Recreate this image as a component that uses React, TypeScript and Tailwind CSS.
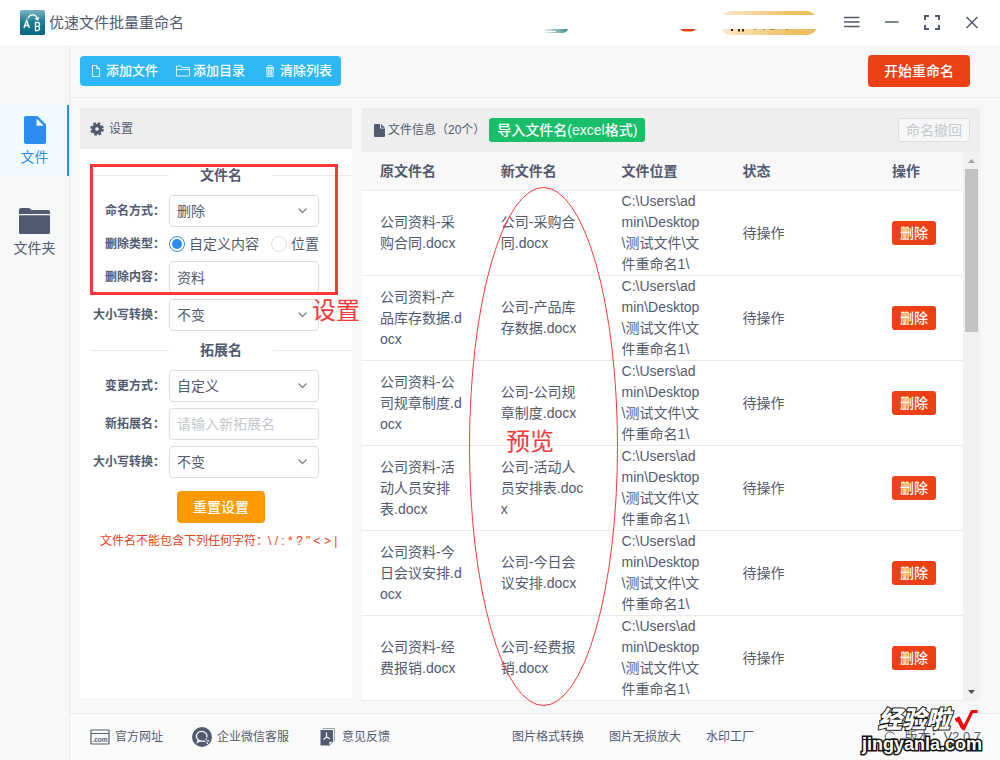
import { ReactNode, useState } from "react";

const files = [
  { id: 1, name: "公司资料-采购合同.docx" },
  { id: 2, name: "公司资料-产品库存数据.docx" },
  { id: 3, name: "公司资料-公司规章制度.docx" },
  { id: 4, name: "公司资料-活动人员安排表.docx" },
  { id: 5, name: "公司资料-今日会议安排.docx" },
  { id: 6, name: "公司资料-经费报销.docx" },
];

const folder = "C:\\Users\\admin\\Desktop\\测试文件\\文件重命名1\\";

const inputStyle =
  "w-full h-8 rounded border border-[#dcdee2] bg-white px-[7px] text-sm text-[#515a6e] placeholder:text-[#c5c8ce] outline-none";

function Logo() {
  return (
    <svg width="25" height="25" viewBox="0 0 25 25" aria-hidden="true">
      <defs>
        <linearGradient id="logo" x1="0" y1="0" x2="0" y2="1">
          <stop offset="0" stopColor="#7fb3c0" />
          <stop offset="0.45" stopColor="#1f7f96" />
          <stop offset="1" stopColor="#04677f" />
        </linearGradient>
      </defs>
      <rect width="25" height="25" rx="1.5" fill="url(#logo)" />
      <g fill="none" stroke="#fff" strokeWidth="1.3">
        <path d="M4 18 6.700 10.200 9.400 18M5 15.500h3.500" />
        <path d="M15.500 12.500v8h2.500a2.200 2.200 0 0 0 0-4.200h-2.500 2.200a1.900 1.900 0 0 0 0-3.800z" />
        <path d="M8 8.500C9.500 3.500 16 3.500 17.500 9M15.200 8.200l2.400 1.600 1.200-2.600" />
      </g>
    </svg>
  );
}

function TitleBar() {
  return (
    <header className="h-[45px] bg-white flex items-center pl-5 pr-[21px]">
      <Logo />
      <h1 className="ml-1 text-[15px] leading-5">优速文件批量重命名</h1>
      <svg
        className="ml-auto"
        width="276"
        height="24"
        viewBox="0 0 276 24"
        aria-hidden="true"
      >
        <defs>
          <linearGradient id="vip" x1="0" x2="1">
            <stop offset="0" stopColor="#fbe8cb" />
            <stop offset="0.7" stopColor="#eec269" />
            <stop offset="1" stopColor="#ebbb57" />
          </linearGradient>
          <linearGradient id="avatar" x1="0" x2="1">
            <stop offset="0" stopColor="#dcebed" />
            <stop offset="1" stopColor="#3f8f98" />
          </linearGradient>
        </defs>
        <path d="M1 18h23q-1 3.500-5 4H1z" fill="url(#avatar)" />
        <path d="M1 20.500h11" stroke="#fff" />
        <path d="M136 18h16q-2 2.500-5 2.500h-6q-3 0-5-2.500z" fill="#ed4014" />
        <rect x="176" width="98" height="24" rx="12" fill="url(#vip)" />
        <rect x="170" y="4" width="106" height="14" fill="#fff" />
        <path
          d="M188 18v2M195 18v2.500M199 18v2.500"
          stroke="#3a2410"
          strokeWidth="2"
        />
        <path d="M210 18.500h2M219 18.500h2M226 18.500h5M242 18.500h2" stroke="#b98a3e" />
      </svg>
      <div className="ml-6 flex items-center gap-[25px]">
        <button type="button" aria-label="菜单">
          <svg width="16" height="16" viewBox="0 0 16 16" stroke="#515a6e" strokeWidth="1.6">
            <path d="M0 2.500h15.500M0 7h15.500M0 11.500h15.500" />
          </svg>
        </button>
        <button type="button" aria-label="最小化">
          <svg width="14" height="16" viewBox="0 0 14 16" stroke="#515a6e" strokeWidth="1.5">
            <path d="M0 7h13.500" />
          </svg>
        </button>
        <button type="button" aria-label="最大化">
          <svg width="16" height="16" viewBox="0 0 16 16" fill="none" stroke="#515a6e" strokeWidth="2">
            <path d="M1 5V1h4M11 1h4v4M15 10v4h-4M5 14H1v-4" />
          </svg>
        </button>
        <button type="button" aria-label="关闭">
          <svg width="14" height="16" viewBox="0 0 14 16" stroke="#515a6e" strokeWidth="1.5">
            <path d="M1.500 2l11 11M12.500 2l-11 11" />
          </svg>
        </button>
      </div>
    </header>
  );
}

function SideItem({
  active,
  label,
  children,
}: {
  active?: boolean;
  label: string;
  children: ReactNode;
}) {
  return (
    <a
      href="#"
      className={`flex flex-col items-center h-[71px] pt-[9px] text-sm leading-5 ${
        active
          ? "bg-[#f0faff] text-[#2d8cf0] shadow-[inset_-2px_0_0_#2d8cf0]"
          : ""
      }`}
    >
      <span className="h-8 mb-px flex items-center">{children}</span>
      {label}
    </a>
  );
}

function Sidebar() {
  return (
    <nav className="w-[70px] shrink-0 border-r border-[#e8eaec] pt-15 flex flex-col gap-5">
      <SideItem active label="文件">
        <svg width="22" height="28" viewBox="0 0 22 28" fill="currentColor">
          <path
            fillRule="evenodd"
            d="M2 0h11.500L22 8.500V26a2 2 0 0 1-2 2H2a2 2 0 0 1-2-2V2a2 2 0 0 1 2-2zM12.500 2.500V9.800h7.300z"
          />
        </svg>
      </SideItem>
      <SideItem label="文件夹">
        <svg width="31" height="26" viewBox="0 0 31 26" fill="currentColor">
          <path d="M0 6V2a2 2 0 0 1 2-2h8l3 2h16a2 2 0 0 1 2 2v2z" />
          <path d="M0 7.200h31V24.500a1.500 1.500 0 0 1-1.500 1.500h-28A1.500 1.500 0 0 1 0 24.500z" />
        </svg>
      </SideItem>
    </nav>
  );
}

function ToolButton({ label, children }: { label: string; children: ReactNode }) {
  return (
    <button
      type="button"
      className="h-[30px] px-[9px] flex items-center gap-[3px] text-[13px] leading-5 font-medium text-white cursor-pointer"
    >
      {children}
      {label}
    </button>
  );
}

function Toolbar() {
  return (
    <div className="h-[53px] pl-2.5 pr-[30px] flex items-center justify-between border-b border-[#e8eaec]">
      <div className="flex rounded bg-[#2db7f5]">
        <ToolButton label="添加文件">
          <svg width="14" height="14" viewBox="0 0 14 14" fill="none" stroke="#fff" strokeOpacity="0.85">
            <path d="M3.500 1.500h4l3 3v8h-7zM7.500 1.500v3h3" />
          </svg>
        </ToolButton>
        <ToolButton label="添加目录">
          <svg width="14" height="14" viewBox="0 0 14 14" fill="none" stroke="#fff" strokeOpacity="0.85">
            <path d="M0.500 12V2h4.500l1 1.500h7.500V12zM0.500 5.500h13" />
          </svg>
        </ToolButton>
        <ToolButton label="清除列表">
          <svg width="14" height="14" viewBox="0 0 14 14" fill="none" stroke="#fff" strokeOpacity="0.7">
            <path d="M2.500 3.500h9M5 3V1.500h4V3" />
            <path
              d="M3.500 4.500h7l-.5 8H4zM5.500 5.500v6M7 5.500v6M8.500 5.500v6"
              fill="#fff"
              fillOpacity="0.2"
            />
          </svg>
        </ToolButton>
      </div>
      <button
        type="button"
        className="h-8 px-4 rounded bg-[#ed4014] text-sm font-medium text-white cursor-pointer"
      >
        开始重命名
      </button>
    </div>
  );
}

function Divider({ children }: { children: ReactNode }) {
  return (
    <div className="my-[9px] ml-2.5 flex items-center text-sm leading-[21px] font-bold">
      <span className="flex-1 h-px bg-[#e8eaec]" />
      <h3 className="w-[104px] text-center">{children}</h3>
      <span className="flex-1 h-px bg-[#e8eaec]" />
    </div>
  );
}

function Field({
  label,
  id,
  children,
}: {
  label: string;
  id: string;
  children: ReactNode;
}) {
  return (
    <div className="flex items-center pr-[33px]">
      <label
        htmlFor={id}
        className="w-[85px] mr-1 shrink-0 text-right text-xs font-bold whitespace-nowrap"
      >
        {label}
      </label>
      <div className="flex-1 min-w-0">{children}</div>
    </div>
  );
}

function Select({ id, options }: { id: string; options: string[] }) {
  return (
    <div className="relative">
      <select id={id} className={`${inputStyle} appearance-none`}>
        {options.map((option) => (
          <option key={option}>{option}</option>
        ))}
      </select>
      <svg
        className="absolute right-3 top-3 pointer-events-none"
        width="9"
        height="8"
        viewBox="0 0 9 8"
        fill="none"
        stroke="#808695"
        strokeWidth="1.4"
      >
        <path d="M0.500 1.500l4 4 4-4" />
      </svg>
    </div>
  );
}

function Radio({
  id,
  label,
  checked,
  onChange,
}: {
  id: string;
  label: string;
  checked: boolean;
  onChange: () => void;
}) {
  return (
    <label htmlFor={id} className="flex items-center gap-1 text-sm whitespace-nowrap">
      <input
        id={id}
        type="radio"
        name="deleteType"
        checked={checked}
        onChange={onChange}
        className="appearance-none w-4 h-4 rounded-full border border-[#dcdee2] bg-white bg-clip-content p-0.5 checked:border-[#2d8cf0] checked:bg-[#2d8cf0]"
      />
      {label}
    </label>
  );
}

function Settings() {
  const [type, setType] = useState("custom");
  const [content, setContent] = useState("资料");

  return (
    <section className="w-68 shrink-0 mb-[3px] bg-white">
      <h2 className="h-[41px] px-2.5 flex items-center gap-[5px] bg-[#eeeeee] text-xs">
        <svg width="14" height="14" viewBox="0 0 14 14" fill="none" stroke="#515a6e">
          <circle cx="7" cy="7" r="3.500" strokeWidth="3.400" />
          <circle cx="7" cy="7" r="5.700" strokeWidth="2.200" strokeDasharray="2.600 1.877" />
        </svg>
        设置
      </h2>
      <form className="relative pt-[7px]" onSubmit={(e) => e.preventDefault()}>
        <Divider>文件名</Divider>
        <div className="flex flex-col gap-1.5">
          <Field id="mode" label="命名方式：">
            <Select id="mode" options={["删除", "替换", "插入"]} />
          </Field>
          <Field id="typeCustom" label="删除类型：">
            <div className="h-[22px] flex items-center justify-between">
              <Radio
                id="typeCustom"
                label="自定义内容"
                checked={type === "custom"}
                onChange={() => setType("custom")}
              />
              <Radio
                id="typePosition"
                label="位置"
                checked={type === "position"}
                onChange={() => setType("position")}
              />
            </div>
          </Field>
          <Field id="content" label="删除内容：">
            <input
              id="content"
              className={inputStyle}
              value={content}
              onChange={(e) => setContent(e.target.value)}
            />
          </Field>
          <Field id="nameCase" label="大小写转换：">
            <Select id="nameCase" options={["不变", "大写", "小写"]} />
          </Field>
        </div>
        <Divider>拓展名</Divider>
        <div className="flex flex-col gap-1.5">
          <Field id="extMode" label="变更方式：">
            <Select id="extMode" options={["自定义", "不变"]} />
          </Field>
          <Field id="ext" label="新拓展名：">
            <input id="ext" className={inputStyle} placeholder="请输入新拓展名" />
          </Field>
          <Field id="extCase" label="大小写转换：">
            <Select id="extCase" options={["不变", "大写", "小写"]} />
          </Field>
        </div>
        <button
          type="reset"
          className="mt-[13px] ml-[97px] h-8 px-4 rounded bg-[#ff9900] text-sm font-medium text-white cursor-pointer"
        >
          重置设置
        </button>
        <p className="mt-2 pl-5 text-xs leading-5 text-[#ed4014] whitespace-nowrap">
          文件名不能包含下列任何字符：\ / : * ? " &lt; &gt; |
        </p>
        <div className="absolute left-2.5 top-[15px] w-62 h-[131px] border-3 border-[#fb3838] pointer-events-none" />
        <span className="absolute left-58 top-[146px] z-10 text-2xl leading-8 text-[#fb3838] whitespace-nowrap pointer-events-none">
          设置
        </span>
      </form>
    </section>
  );
}

function FileTable() {
  return (
    <table className="flex-1 table-fixed border-separate border-spacing-0 bg-white text-sm leading-[21px]">
      <colgroup>
        <col className="w-[20.1%]" />
        <col className="w-[20.1%]" />
        <col className="w-[20.1%]" />
        <col className="w-[24.9%]" />
        <col className="w-[14.8%]" />
      </colgroup>
      <thead>
        <tr className="h-[39px] bg-[#f8f8f9] text-left">
          {["原文件名", "新文件名", "文件位置", "状态", "操作"].map((title) => (
            <th key={title} className="px-[18px] border-b border-[#e8eaec] font-bold">
              {title}
            </th>
          ))}
        </tr>
      </thead>
      <tbody>
        {files.map((file) => (
          <tr key={file.id} className="h-[85px] break-all">
            <td className="px-[18px] border-b border-[#e8eaec]">{file.name}</td>
            <td className="px-[18px] border-b border-[#e8eaec]">
              {file.name.replace("资料", "")}
            </td>
            <td className="px-[18px] border-b border-[#e8eaec]">{folder}</td>
            <td className="px-[18px] border-b border-[#e8eaec]">待操作</td>
            <td className="px-[18px] border-b border-[#e8eaec]">
              <button
                type="button"
                className="block h-6 px-2 rounded-[3px] bg-[#ed4014] font-medium text-white whitespace-nowrap cursor-pointer"
              >
                删除
              </button>
            </td>
          </tr>
        ))}
      </tbody>
    </table>
  );
}

function FilePanel() {
  return (
    <section className="relative flex-1 min-w-0">
      <div className="h-11 pl-3 pr-2.5 flex items-center bg-[#eeeeee]">
        <svg width="11" height="13" viewBox="0 0 11 13" fill="#515a6e">
          <path d="M1 0h5v4.500h5V12a1 1 0 0 1-1 1H1a1 1 0 0 1-1-1V1a1 1 0 0 1 1-1zM7 0l4 3.700H7z" />
        </svg>
        <h2 className="ml-[3px] text-xs">文件信息（20个）</h2>
        <button
          type="button"
          className="ml-1 h-6 px-2 rounded-[3px] bg-[#19be6b] text-sm leading-5 font-medium text-white cursor-pointer"
        >
          导入文件名(excel格式)
        </button>
        <button
          type="button"
          disabled
          className="ml-auto h-6 px-[7px] rounded-[3px] border border-[#dcdee2] bg-[#f7f7f7] text-sm leading-5 text-[#c5c8ce]"
        >
          命名撤回
        </button>
      </div>
      <div className="flex">
        <FileTable />
        <div className="w-[17px] shrink-0 flex flex-col items-center bg-[#f1f1f1]">
          <svg width="17" height="17" viewBox="0 0 17 17" fill="#a3a3a3">
            <path d="M5 11h7L8.500 7z" />
          </svg>
          <div className="w-[13px] h-[163px] bg-[#c1c1c1]" />
          <svg className="mt-auto" width="17" height="17" viewBox="0 0 17 17" fill="#505050">
            <path d="M5 6h7L8.500 10z" />
          </svg>
        </div>
      </div>
      <svg
        className="absolute left-[107px] top-[79px] pointer-events-none"
        width="149"
        height="519"
        viewBox="0 0 149 519"
        fill="none"
        stroke="#fb3838"
      >
        <ellipse cx="74.500" cy="259.500" rx="74" ry="259" />
      </svg>
      <span className="absolute left-36 top-[318px] text-2xl leading-8 text-[#fb3838] pointer-events-none">
        预览
      </span>
    </section>
  );
}

function Footer() {
  return (
    <footer className="relative h-[47px] pl-5 pr-[19px] flex items-center border-t border-[#e8eaec] bg-[#fafafa] text-xs leading-5 whitespace-nowrap">
      <div className="flex items-center gap-[29px]">
        <a href="#" className="flex items-center gap-[5px]">
          <svg width="20" height="20" viewBox="0 0 20 20" fill="none" stroke="#515a6e">
            <rect x="1" y="3" width="18" height="14" rx="0.500" strokeWidth="1.200" />
            <path d="M1 6.500h18" />
            <text
              x="10"
              y="14.500"
              textAnchor="middle"
              fontSize="6.500"
              fontWeight="bold"
              fill="#515a6e"
              stroke="none"
            >
              .com
            </text>
          </svg>
          官方网址
        </a>
        <a href="#" className="flex items-center gap-[5px]">
          <svg width="20" height="20" viewBox="0 0 20 20" fill="none" stroke="#fff">
            <circle cx="10" cy="10" r="10" fill="#515a6e" stroke="none" />
            <path
              d="M14.800 10.500a5.300 4.900 0 1 0-3.300 3.300M6.200 13l-.7 2.300 2.500-1.300"
              strokeWidth="1.300"
            />
            <path d="M14.200 11.500v1.800M13.300 14.300h-2M17.200 13.800h-2M15.200 15.200v1.800" strokeWidth="1.200" />
          </svg>
          企业微信客服
        </a>
        <a href="#" className="flex items-center gap-[7px] ml-0.5">
          <svg width="15" height="18" viewBox="0 0 15 18">
            <path d="M2.500 0.500h12v13" fill="none" stroke="#9aa0ad" />
            <path d="M0.500 2h12.500v11.500L9 17.500H0.500z" fill="#515a6e" />
            <path d="M9 17.500v-4h4z" fill="#fafafa" stroke="#515a6e" strokeWidth="0.600" />
            <path d="M6.500 4.500v4.500l-3 2.500M6.500 9l3.500 1.800" fill="none" stroke="#fff" strokeWidth="1.200" />
          </svg>
          意见反馈
        </a>
      </div>
      <div className="ml-30 pl-0.5 flex items-center gap-[25px]">
        <a href="#">图片格式转换</a>
        <a href="#">图片无损放大</a>
        <a href="#">水印工厂</a>
      </div>
      <div className="ml-auto flex items-center gap-2 text-[13px]">
        <svg width="12" height="12" viewBox="0 0 12 12" fill="none" stroke="#515a6e">
          <path d="M10.500 3.500A5 5 0 1 0 11 7" />
        </svg>
        版本：V2.0.7
      </div>
      <div className="absolute right-4 -top-2 w-[122px] font-bold text-white pointer-events-none [paint-order:stroke] [-webkit-text-stroke:3px_#111]">
        <div className="flex items-center justify-end gap-1 pr-1.5 text-2xl leading-7 font-black italic [-webkit-text-stroke:2px_#111]">
          经验啦
          <svg width="24" height="24" viewBox="0 0 24 24" fill="none" stroke="#f00">
            <path d="M1.500 12.500l3-1.500 4.500 9" strokeWidth="4" />
            <path d="M9 22L18 3.500h5.500" strokeWidth="3" />
          </svg>
        </div>
        <div className="text-lg leading-5">jingyanla.com</div>
      </div>
    </footer>
  );
}

export default function App() {
  return (
    <div className="min-h-screen flex flex-col bg-[#f5f7f9] text-[#515a6e] font-['Liberation_Sans','Noto_Sans_CJK_SC',sans-serif]">
      <TitleBar />
      <div className="flex-1 flex">
        <Sidebar />
        <main className="flex-1 min-w-0 flex flex-col">
          <Toolbar />
          <div className="flex-1 flex gap-2.5 pl-2.5 pr-5 pt-2.5 pb-3">
            <Settings />
            <FilePanel />
          </div>
          <Footer />
        </main>
      </div>
    </div>
  );
}
